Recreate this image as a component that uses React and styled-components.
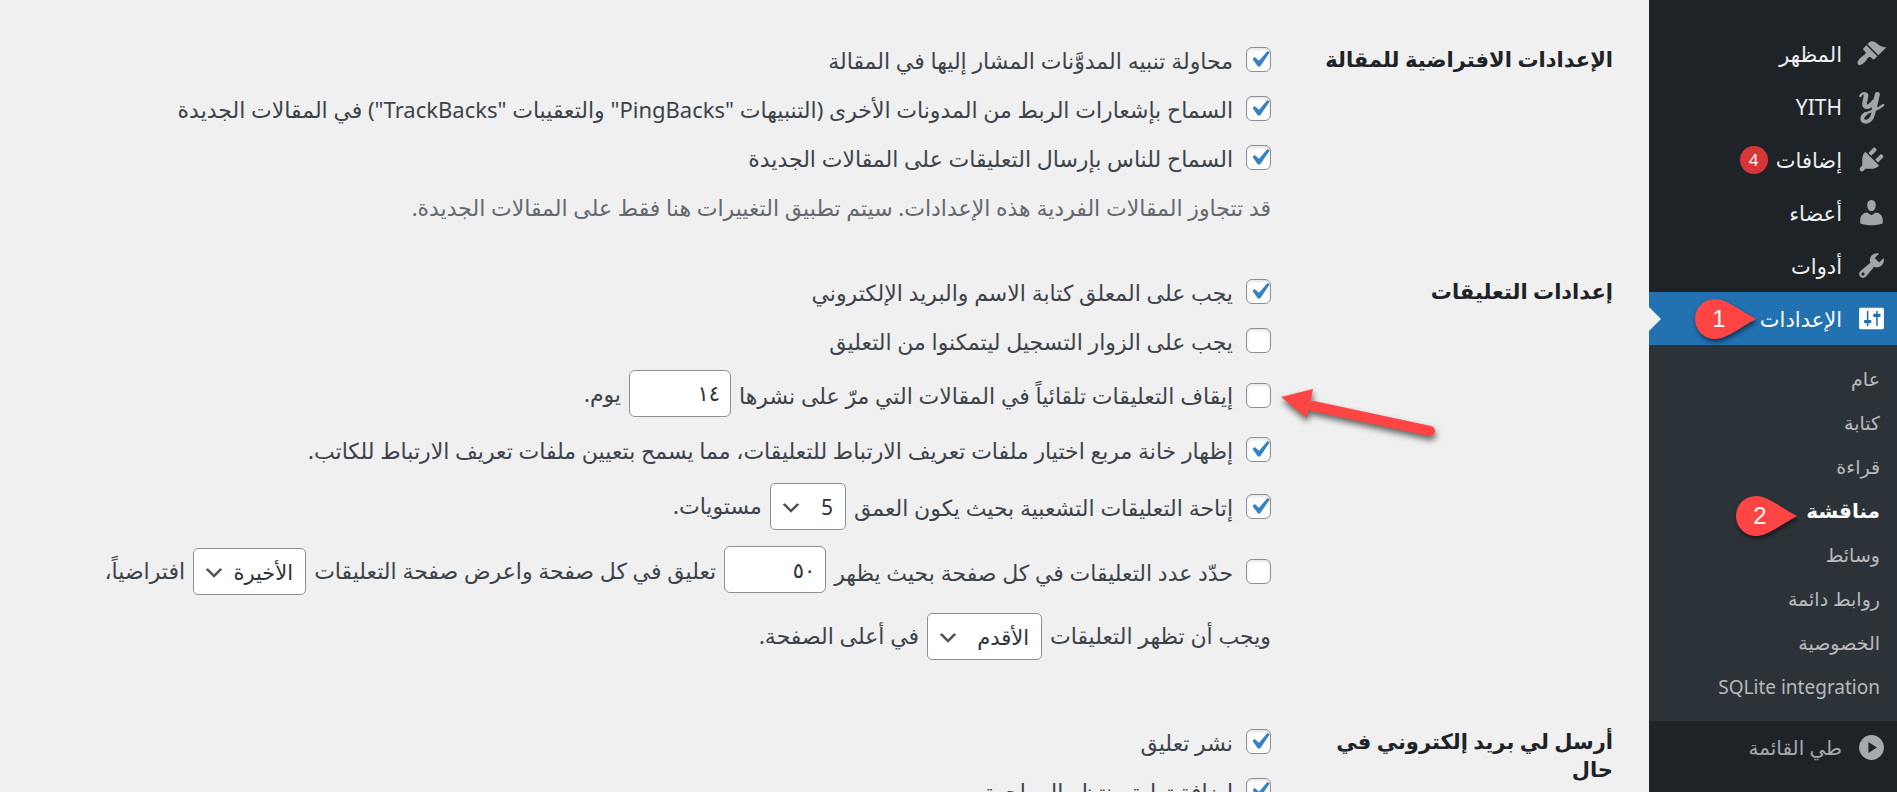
import styled, { createGlobalStyle } from "styled-components";

const App = () => {
    return (
        <Page dir="rtl" lang="ar">
            <GlobalStyle />
            <Sidebar />
            <Discussion />
        </Page>
    );
}

export default App;

const Sidebar = () => {
    return (
        <SideNav>
            {menu.map((item) => (
                <MenuLink href="#" key={item.label}>
                    <MenuIcon viewBox="0 0 20 20">{item.icon}</MenuIcon>
                    {item.label}
                    {item.count && <Count>{item.count}</Count>}
                </MenuLink>
            ))}

            <MenuLink href="#" $active>
                <MenuIcon viewBox="0 0 20 20"><path d={settingsPath} /></MenuIcon>
                الإعدادات
                <Pin number="1" $end="140px" $top="6px" />
            </MenuLink>

            <SubMenu>
                {subMenu.map((label) => (
                    <li key={label}>
                        <SubLink href="#" $current={label === "مناقشة"}>
                            {label}
                            {label === "مناقشة" && <Pin number="2" $end="99px" $top="6px" />}
                        </SubLink>
                    </li>
                ))}
            </SubMenu>

            <Collapse type="button">
                <MenuIcon viewBox="0 0 20 20">
                    <path fillRule="evenodd" d="M10 2a8 8 0 1 0 0 16a8 8 0 1 0 0-16zM8 6.500l5.500 3.500L8 13.500z" />
                </MenuIcon>
                طي القائمة
            </Collapse>
        </SideNav>
    );
}

const Pin = ({ number, $end, $top }) => (
    <PinBox $end={$end} $top={$top}>
        <svg width="62" height="42" viewBox="0 0 62 42">
            <path fill="#ff4444" d="M20 1C31 1 43 11 61 21C43 31 31 41 20 41A20 20 0 0 1 20 1z" />
        </svg>
        <span>{number}</span>
    </PinBox>
)

const Check = ({ id, label, checked }) => (
    <CheckLabel htmlFor={id}>
        <Checkbox type="checkbox" id={id} defaultChecked={checked} />
        {label}
    </CheckLabel>
)

const Discussion = () => {
    return (
        <Content>
            <Section>
                <Heading>الإعدادات الافتراضية للمقالة</Heading>
                <Fields>
                    <Row><Check id="pingback" checked label="محاولة تنبيه المدوَّنات المشار إليها في المقالة" /></Row>
                    <Row><Check id="pings" checked label={'السماح بإشعارات الربط من المدونات الأخرى (التنبيهات "PingBacks" والتعقيبات "TrackBacks") في المقالات الجديدة'} /></Row>
                    <Row><Check id="comments" checked label="السماح للناس بإرسال التعليقات على المقالات الجديدة" /></Row>
                    <Row><Hint>قد تتجاوز المقالات الفردية هذه الإعدادات. سيتم تطبيق التغييرات هنا فقط على المقالات الجديدة.</Hint></Row>
                </Fields>
            </Section>

            <Section $roomy>
                <Heading>إعدادات التعليقات</Heading>
                <Fields>
                    <Row><Check id="name-email" checked label="يجب على المعلق كتابة الاسم والبريد الإلكتروني" /></Row>
                    <Row><Check id="registration" label="يجب على الزوار التسجيل ليتمكنوا من التعليق" /></Row>
                    <Row $height="60px">
                        <Check id="close" label="إيقاف التعليقات تلقائياً في المقالات التي مرّ على نشرها" />
                        <NumberInput type="text" aria-label="عدد الأيام" defaultValue="١٤" />
                        <Words>يوم.</Words>
                        <Arrow width="170" height="70" viewBox="0 0 170 70">
                            <path d="M37 33L154 58" stroke="#ff4444" strokeWidth="10" strokeLinecap="round" />
                            <path d="M5 24L37 16L31 45z" fill="#ff4444" />
                        </Arrow>
                    </Row>
                    <Row><Check id="cookies" checked label="إظهار خانة مربع اختيار ملفات تعريف الارتباط للتعليقات، مما يسمح بتعيين ملفات تعريف الارتباط للكاتب." /></Row>
                    <Row $height="65px">
                        <Check id="thread" checked label="إتاحة التعليقات التشعبية بحيث يكون العمق" />
                        <Select aria-label="العمق" $width="76px"><option>5</option></Select>
                        <Words>مستويات.</Words>
                    </Row>
                    <Row $height="65px">
                        <Check id="paged" label="حدّد عدد التعليقات في كل صفحة بحيث يظهر" />
                        <NumberInput type="text" aria-label="عدد التعليقات" defaultValue="٥٠" />
                        <Words>تعليق في كل صفحة واعرض صفحة التعليقات</Words>
                        <Select aria-label="الصفحة الافتراضية" $width="113px"><option>الأخيرة</option></Select>
                        <Words>افتراضياً،</Words>
                    </Row>
                    <Row $height="65px">
                        <Words>ويجب أن تظهر التعليقات</Words>
                        <Select aria-label="ترتيب التعليقات" $width="115px"><option>الأقدم</option></Select>
                        <Words>في أعلى الصفحة.</Words>
                    </Row>
                </Fields>
            </Section>

            <Section>
                <Heading>أرسل لي بريد إلكتروني في حال</Heading>
                <Fields>
                    <Row><Check id="notify" checked label="نشر تعليق" /></Row>
                    <Row><Check id="moderation" checked label="إضافة تعليق ينتظر المراجعة" /></Row>
                </Fields>
            </Section>
        </Content>
    );
}

const settingsPath = "M18 16V4c0-.55-.45-1-1-1H3c-.55 0-1 .45-1 1v12c0 .55.45 1 1 1h14c.55 0 1-.45 1-1zM8 11h1c.55 0 1 .45 1 1s-.45 1-1 1H8v1.500c0 .28-.22.500-.500.500s-.500-.22-.500-.500V13H6c-.55 0-1-.45-1-1s.45-1 1-1h1V5.500c0-.28.22-.500.500-.500s.500.22.500.500V11zm5-2h-1c-.55 0-1-.45-1-1s.45-1 1-1h1V5.500c0-.28.22-.500.500-.500s.500.22.500.500V7h1c.55 0 1 .45 1 1s-.45 1-1 1h-1v5.500c0 .28-.22.500-.500.500s-.500-.22-.500-.500V9z"

const menu = [
    {
        label: "المظهر",
        icon: <path d="M14.48 11.06L7.41 3.99l1.500-1.500c.500-.56 2.300-.47 3.510.32 1.210.8 1.430 1.280 2.910 2.100 1.180.64 2.450 1.260 4.450.85zm-.71.71L6.700 4.700 4.930 6.470c-.39.39-.39 1.020 0 1.410l1.060 1.060c.39.39.39 1.030 0 1.420-.6.6-1.430 1.110-2.210 1.690-.35.26-.7.53-1.010.84C1.430 14.230.4 16.080 1.400 17.070c.99 1 2.840-.03 4.180-1.360.31-.31.58-.66.85-1.020.57-.78 1.080-1.610 1.690-2.210.39-.39 1.020-.39 1.410 0l1.060 1.060c.39.39 1.020.39 1.410 0z" />,
    },
    {
        label: "YITH",
        icon: (
            <g fill="none" stroke="currentColor" strokeLinecap="round" strokeLinejoin="round">
                <path strokeWidth="1.600" d="M2.800 3.200C3.500 1.400 5.500 1 6.600 1.900" />
                <path strokeWidth="3" d="M6.500 2.700C6.400 5.500 5 7.600 5.600 9.300C6.500 11 9.500 10 11.500 7" />
                <path strokeWidth="3.300" d="M13.700 2.300C13.200 5 12.300 8 11.800 11.500" />
                <path strokeWidth="2.500" d="M11.600 12C11 16.500 9.500 19.700 6.500 19.800C3.400 19.800 3.200 16.800 6.200 14.700" />
                <path strokeWidth="1.500" d="M6.200 14.600C9.500 12.700 14 12.500 17.600 9" />
            </g>
        ),
    },
    {
        label: "إضافات",
        count: 4,
        icon: <path d="M13.110 4.360L9.870 7.600 8 5.730l3.240-3.240c.35-.34 1.050-.2 1.560.32.52.51.66 1.210.31 1.550zm-8 1.770l.91-1.120 9.010 9.010-1.190.84c-.71.71-2.630 1.160-3.820 1.160H6.140L4.900 17.260c-.59.59-1.540.59-2.120 0-.59-.58-.59-1.530 0-2.120l1.240-1.240v-3.880c0-1.130.4-3.190 1.090-3.890zm7.260 3.970l3.240-3.240c.34-.35 1.040-.21 1.550.31.52.51.66 1.210.31 1.550l-3.240 3.250z" />,
    },
    {
        label: "أعضاء",
        icon: <path d="M10 9.250c-2.270 0-2.730-3.440-2.730-3.440C7 4.020 7.820 2 9.970 2c2.160 0 2.980 2.020 2.710 3.810 0 0-.41 3.440-2.680 3.440zm0 2.570L12.720 10c2.390 0 4.520 2.330 4.520 4.530v2.490s-3.650 1.130-7.240 1.130c-3.650 0-7.240-1.130-7.240-1.130v-2.490c0-2.250 1.940-4.480 4.470-4.480z" />,
    },
    {
        label: "أدوات",
        icon: <path d="M16.680 9.770c-1.340 1.340-3.300 1.670-4.950.99l-5.410 6.520c-.99.99-2.590.99-3.580 0s-.99-2.590 0-3.570l6.520-5.420c-.68-1.650-.35-3.610.99-4.950 1.280-1.280 3.120-1.620 4.720-1.060l-2.890 2.890 2.820 2.820 2.860-2.870c.53 1.580.18 3.390-1.080 4.650zM3.810 16.210c.4.39 1.040.39 1.430 0 .4-.4.4-1.040 0-1.430-.39-.4-1.030-.4-1.430 0-.39.39-.39 1.030 0 1.430z" />,
    },
]

const subMenu = ["عام", "كتابة", "قراءة", "مناقشة", "وسائط", "روابط دائمة", "الخصوصية", "SQLite integration"]

const tick = `url("data:image/svg+xml,%3Csvg xmlns='http://www.w3.org/2000/svg' viewBox='0 0 20 20'%3E%3Cpath d='M14.830 4.890l1.340.94-5.810 8.380H9.020L5.780 9.670l1.340-1.250 2.570 2.400z' fill='%233582c4'/%3E%3C/svg%3E")`
const chevron = `url("data:image/svg+xml,%3Csvg xmlns='http://www.w3.org/2000/svg' viewBox='0 0 20 20'%3E%3Cpath d='M5 6l5 5 5-5 2 1-7 7-7-7 2-1z' fill='%23555'/%3E%3C/svg%3E")`

const GlobalStyle = createGlobalStyle`
    * {
        box-sizing: border-box;
    }

    body {
        margin: 0;
        overflow: hidden;
        background: #f0f0f0;
    }

    body, button, input, select {
        font-family: Tahoma, "Noto Sans", "DejaVu Sans", sans-serif;
        font-size: 20px;
    }
`

const Page = styled.div`
    display: flex;
    height: 100vh;
    overflow: hidden;
    background: #f0f0f0;
    color: #3c434a;
`

const SideNav = styled.nav`
    flex: 0 0 248px;
    padding-top: 27px;
    background: #1d2327;
`

const MenuLink = styled.a`
    position: relative;
    display: flex;
    align-items: center;
    height: 53px;
    padding-right: 10px;
    color: ${(props) => (props.$active ? "#fff" : "#f0f0f1")};
    background: ${(props) => (props.$active ? "#2271b1" : "transparent")};
    font-size: 21px;
    text-decoration: none;

    > svg {
        color: ${(props) => (props.$active ? "#fff" : "#a0a5aa")};
    }

    &::after {
        content: "";
        display: ${(props) => (props.$active ? "block" : "none")};
        position: absolute;
        left: 0;
        border: 12px solid transparent;
        border-left-color: #f0f0f0;
        border-right-width: 0;
    }
`

const MenuIcon = styled.svg`
    flex: none;
    width: 31px;
    height: 31px;
    margin-left: 14px;
    fill: currentColor;
    overflow: visible;
`

const Count = styled.span`
    width: 28px;
    height: 28px;
    margin-right: 8px;
    border-radius: 50%;
    background: #d63638;
    color: #fff;
    font-size: 17px;
    line-height: 28px;
    text-align: center;
`

const PinBox = styled.span`
    position: absolute;
    top: ${(props) => props.$top};
    right: ${(props) => props.$end};
    width: 62px;
    height: 42px;
    color: #fff;
    font: 24px/42px "Liberation Sans", Arial, sans-serif;

    svg {
        display: block;
        filter: drop-shadow(1px 3px 2px rgba(0, 0, 0, 0.5));
    }

    span {
        position: absolute;
        top: 0;
        left: 0;
        width: 48px;
        text-align: center;
    }
`

const SubMenu = styled.ul`
    margin: 0;
    padding: 12px 0;
    background: #2c3338;
    list-style: none;
`

const SubLink = styled.a`
    position: relative;
    display: block;
    height: 44px;
    padding-right: 17px;
    font-size: ${(props) => (props.$current ? "20px" : "19px")};
    line-height: 44px;
    color: ${(props) => (props.$current ? "#fff" : "#b8babd")};
    font-weight: ${(props) => (props.$current ? 700 : 400)};
    text-decoration: none;
`

const Collapse = styled.button`
    display: flex;
    align-items: center;
    height: 53px;
    padding: 0 10px 0 0;
    border: 0;
    background: none;
    color: #a7aaad;
`

const Content = styled.main`
    flex: 1;
    padding: 35px 36px 0 0;
`

const Section = styled.section`
    display: flex;
    margin-bottom: ${(props) => (props.$roomy ? "48px" : "36px")};
`

const Heading = styled.h2`
    flex: 0 0 342px;
    margin: 0;
    padding: 10px 0 0 40px;
    color: #1d2327;
    font-size: 21px;
    font-weight: 700;
    line-height: 28px;
`

const Fields = styled.div`
    flex: 1;
    font-size: 22px;
`

const Row = styled.div`
    position: relative;
    display: flex;
    align-items: center;
    gap: 8px;
    height: ${(props) => props.$height || "49px"};
    white-space: nowrap;
`

const CheckLabel = styled.label`
    display: flex;
    align-items: center;
    gap: 13px;
`

const Checkbox = styled.input`
    appearance: none;
    flex: none;
    width: 25px;
    height: 25px;
    margin: 0;
    border: 1px solid #8c8f94;
    border-radius: 6px;
    background: #fff;
    box-shadow: inset 0 2px 3px rgba(0, 0, 0, 0.1);

    &:checked {
        background: #fff ${tick} -4px -5px / 33px no-repeat;
    }
`

const Hint = styled.p`
    margin: 0;
    color: #646970;
`

const Words = styled.span`
    padding-bottom: 4px;
`

const NumberInput = styled.input`
    width: 102px;
    height: 47px;
    margin: 0 0 4px;
    padding: 0 10px;
    border: 1px solid #8c8f94;
    border-radius: 6px;
    background: #fff;
    color: #2c3338;
    font-size: 21px;
`

const Select = styled.select`
    appearance: none;
    width: ${(props) => props.$width};
    height: 47px;
    padding: 0 12px 0 36px;
    border: 1px solid #8c8f94;
    border-radius: 5px;
    background: #fff ${chevron} 8px 12px / 24px no-repeat;
    color: #2c3338;
    font-size: 21px;
`

const Arrow = styled.svg`
    position: absolute;
    top: 8px;
    right: -175px;
    fill: none;
    filter: drop-shadow(1px 4px 3px rgba(0, 0, 0, 0.6));
`
